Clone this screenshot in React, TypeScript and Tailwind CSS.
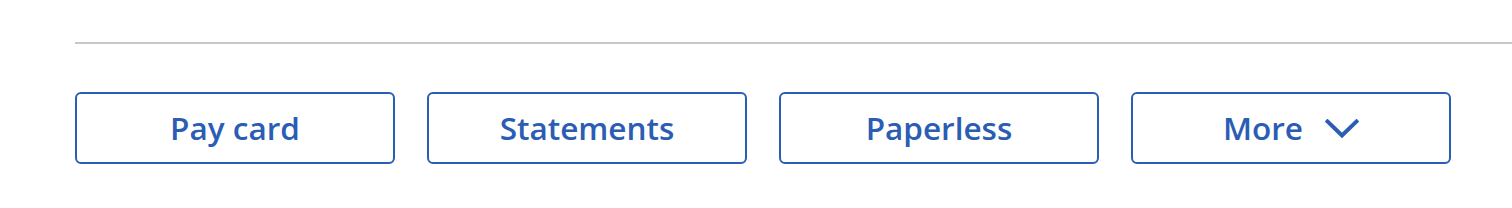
const actions = ["Pay card", "Statements", "Paperless"];

function Chevron() {
  return (
    <svg width="34" height="20" viewBox="0 0 34 20" fill="none" className="ml-[22px] mt-[2px]">
      <path d="M2.5 2.5 L17 16.5 L31.5 2.5" stroke="currentColor" strokeWidth="4" strokeLinecap="square" />
    </svg>
  );
}

export default function App() {
  return (
    <div className="w-[1512px] h-[208px] bg-white pl-[75px] pt-[42px]" style={{ fontFamily: '"Open Sans", "Noto Sans", sans-serif' }}>
      <div className="h-[2px] bg-[#c8c8c8]" />
      <div className="flex gap-[32px] mt-[48px]">
        {actions.map((label) => (
          <button
            key={label}
            className="w-[320px] h-[72px] flex items-center justify-center rounded-[6px] border-2 border-[#2a5db3] text-[#2a5db3] text-[31.5px] font-semibold"
          >
            {label}
          </button>
        ))}
        <button className="w-[320px] h-[72px] flex items-center justify-center rounded-[6px] border-2 border-[#2a5db3] text-[#2a5db3] text-[31.5px] font-semibold">
          More
          <Chevron />
        </button>
      </div>
    </div>
  );
}
